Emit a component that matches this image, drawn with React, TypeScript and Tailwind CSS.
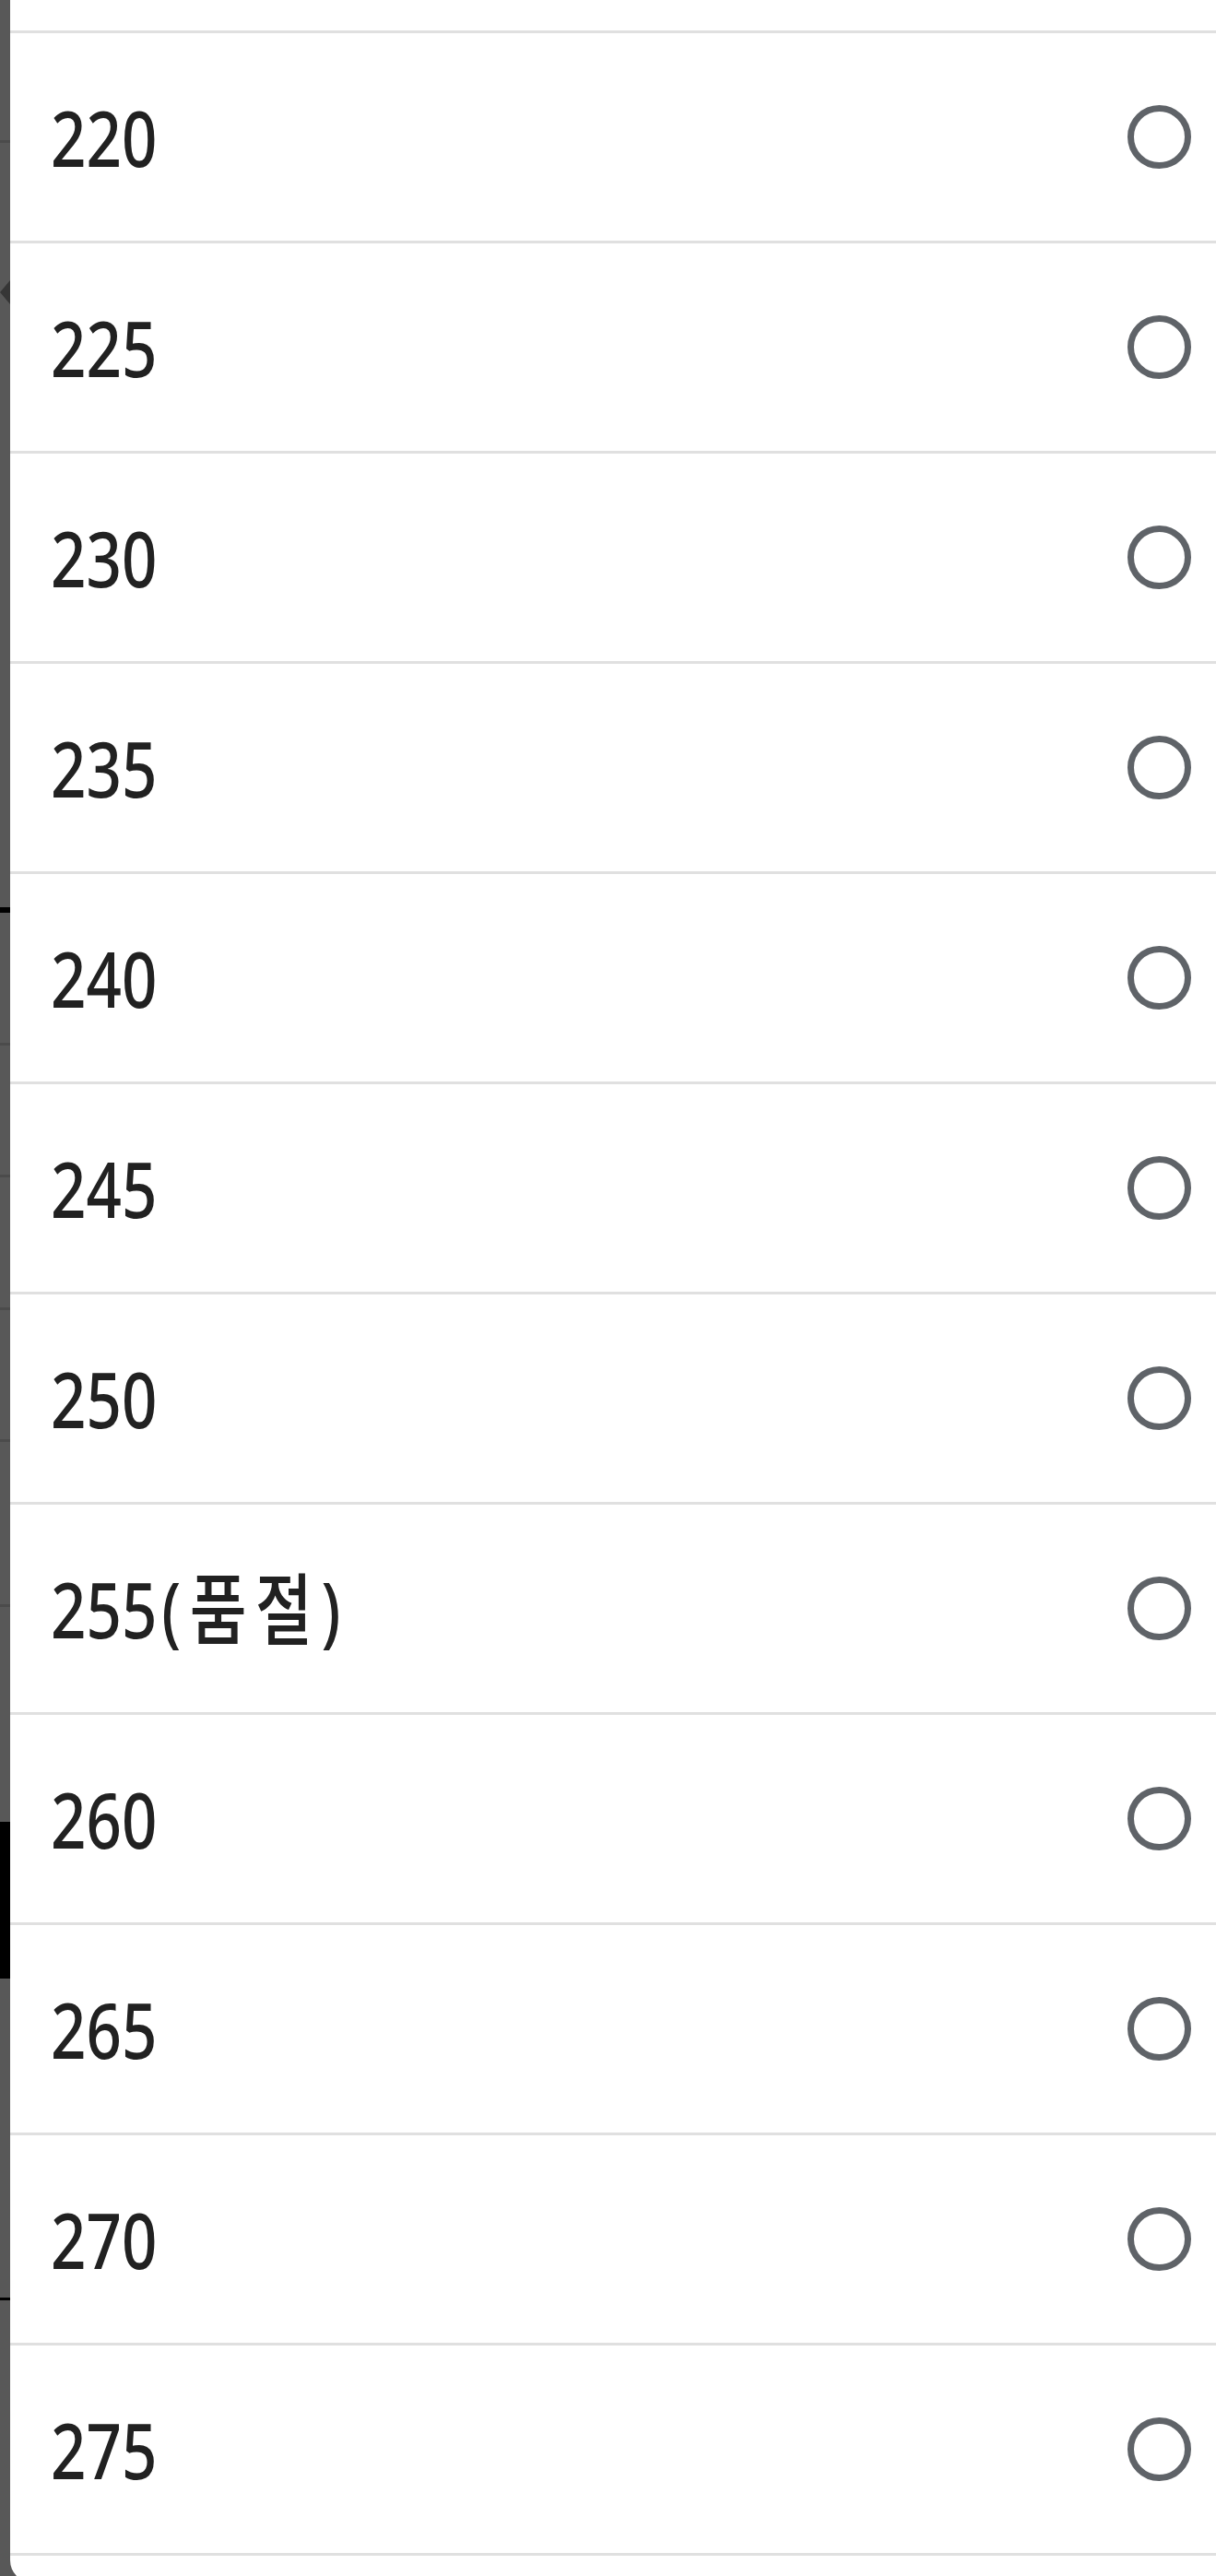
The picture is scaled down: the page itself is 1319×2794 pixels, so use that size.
import React from "react";

const sizes = ["220", "225", "230", "235", "240", "245", "250", "255(품절)", "260", "265", "270", "275"];

function Row({ label }: { label: string }) {
  const i = label.indexOf("(");
  const num = i >= 0 ? label.slice(0, i) : label;
  const rest = i >= 0 ? label.slice(i) : "";
  return (
    <div className="flex h-[228px] shrink-0 items-center justify-between border-b-[3px] border-[#e0e0e0] pl-[44px] pr-[27px]">
      <span
        className="inline-block origin-left scale-x-[0.8] whitespace-nowrap text-[84px] font-medium leading-none text-[#212121]"
        style={{ fontFamily: '"Noto Sans", "Noto Sans CJK KR", sans-serif' }}
      >
        {num}
        {rest && <span className="ml-[6px] tracking-[12px]">{rest}</span>}
      </span>
      <div className="h-[69px] w-[69px] shrink-0 rounded-full border-[7px] border-[#5f6368]" />
    </div>
  );
}

export default function App() {
  return (
    <div className="flex h-[2794px] w-[1319px] overflow-hidden bg-[#585858]">
      <div className="flex w-[11px] shrink-0 flex-col">
        <div className="h-[152px] shrink-0" />
        <div className="h-[3px] shrink-0 bg-[#4b4b4b]" />
        <div className="h-[149px] shrink-0" />
        <svg width="11" height="26" viewBox="0 0 11 26" className="shrink-0">
          <polygon points="11,0 0,13 11,26" fill="#363636" />
        </svg>
        <div className="h-[654px] shrink-0" />
        <div className="h-[6px] shrink-0 bg-black" />
        <div className="h-[141px] shrink-0" />
        <div className="h-[3px] shrink-0 bg-[#4b4b4b]" />
        <div className="h-[140px] shrink-0" />
        <div className="h-[3px] shrink-0 bg-[#4b4b4b]" />
        <div className="h-[141px] shrink-0" />
        <div className="h-[3px] shrink-0 bg-[#4b4b4b]" />
        <div className="h-[140px] shrink-0" />
        <div className="h-[3px] shrink-0 bg-[#4b4b4b]" />
        <div className="h-[176px] shrink-0" />
        <div className="h-[3px] shrink-0 bg-[#4b4b4b]" />
        <div className="h-[233px] shrink-0" />
        <div className="h-[170px] shrink-0 bg-black" />
        <div className="h-[346px] shrink-0" />
        <div className="h-[3px] shrink-0 bg-black" />
      </div>
      <div className="flex h-[2801px] flex-1 shrink-0 flex-col self-start rounded-bl-[24px] bg-white">
        <div className="h-[36px] shrink-0 border-b-[3px] border-[#e0e0e0]" />
        {sizes.map((s) => (
          <Row key={s} label={s} />
        ))}
      </div>
    </div>
  );
}
